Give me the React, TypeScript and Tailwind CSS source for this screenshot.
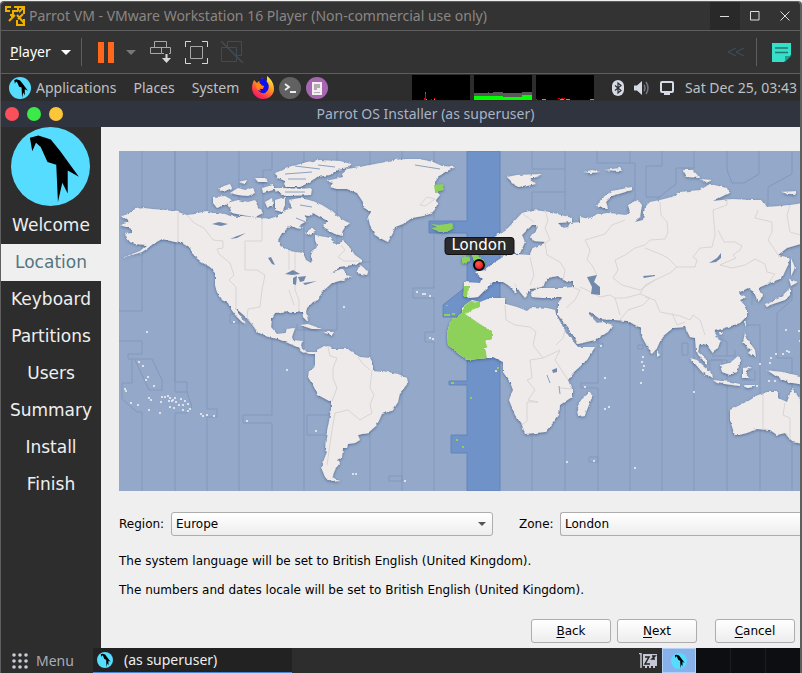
import React from "react";

const SEA = "#94a9c9";

function ParrotLogo({ className }: { className: string }) {
  return (
    <svg viewBox="34 23 234 234" className={className} aria-hidden="true">
      <circle cx="151" cy="140" r="117" fill="#55dcff" />
      <path
        d="M90 55L115 48L152 60L180 95L235 170L202 152V220L186 188L173 245L168 135L142 127L122 82L108 70L97 95Z"
        fill="#000"
      />
    </svg>
  );
}

function VmLogo() {
  return (
    <svg viewBox="0 0 20 20" className="size-5" aria-hidden="true" fill="none" stroke="#efb000" strokeWidth="2">
      <path d="M6 1H1V5H5M9 1H19V8M8 4V9H5M9 5H13M13 1V5M14 6L18 2" />
      <path d="M12 9L19 17M19 13V19H13M13 13L18 8M4 15L10 9M6 10H10M12 14V19H17" />
    </svg>
  );
}

const zoneLines = [
  "M142 151V311H119M119 341H142V354H128V359H152L162 380V390H149L135 360M132 359V383H122V399L137 412H142V491",
  "M175 151V382H187V392H175ZM187 392L192 407L187 413H175V491",
  "M207 151V409H217V417H207V491M239 151V491M272 151V170H263V215M272 310V415H243V423H272V491",
  "M304 151V491M337 151V330H297V324M370 151V491M329 415H307V435H325",
  "M402 151V491M389 476H402V481H389ZM434 151V221M434 233V288H413V298H434V332H425V342H434V491",
  "M532 151V169H565M565 151V210M532 212V192H565M532 430V491M565 400V491",
  "M597 151V163H635V198L626 212M630 151V163M662 151V166H646V197H660M694 151V168H676V184L657 199",
  "M727 151V170L732 183H744L759 174V151M792 151V174L768 187V205",
  "M598 330V383H581V388H598V491M598 343H603V347H598M630 320V491M638 345H643V349H638ZM662 335V491M694 340V491",
  "M682 343H688V355H682ZM711 360H727V491M727 356V342L720 338M760 325H747M760 325V405M760 430V491M792 300L777 313V358H792V491",
  "M752 305V290M792 280V300M589 457H598V462H589ZM353 262H370M233 314H230V323H239",
  "M710 370V360H722V370M735 350V356H712M748 380H755V370",
];

const land = [
  "M122 216L128 214L135 209L144 208L152 209L165 210L178 212L187 215L195 214L202 212L207 211L212 213L218 213L225 214L230 216L237 217L243 216L252 217L262 218L269 219L275 217L280 214L287 213L287 219L293 223L288 228L282 233L278 240L280 245L288 250L295 252L303 253L306 260L311 263L313 258L311 254L317 245L315 240L315 235L320 236L330 238L335 244L340 243L343 240L350 248L355 255L362 260L362 262L352 265L340 267L330 274L338 270L343 269L347 275L352 277L343 280L332 283L322 292L318 300L313 302L307 308L306 312L309 318L307 321L303 317L302 312L292 312L287 311L275 313L272 318L271 327L277 334L285 333L287 329L295 328L292 337L293 340L302 341L301 347L307 352L315 352L318 354L310 354L302 351L297 347L288 343L278 339L268 337L257 332L253 325L247 318L240 312L235 308L240 316L246 324L242 322L236 316L231 309L228 303L222 300L217 292L215 285L215 272L210 267L203 263L195 257L190 248L182 243L175 242L162 239L153 244L148 248L142 252L132 255L122 258L140 251L147 245L135 244L130 242L127 238L125 233L132 232L132 229L120 225L130 222Z",
  "M213 197L225 196L232 200L225 205L217 208L213 203Z",
  "M227 203L238 200L248 202L255 200L258 207L263 213L255 217L242 215L232 213L230 208Z",
  "M218 188L230 184L232 188L223 192ZM230 193L238 188L245 190L253 188L255 193L248 196L238 195ZM238 182L247 180L245 184ZM255 178L265 178L268 182L258 182ZM262 188L273 185L273 190L263 193ZM265 202L272 198L273 205L267 207ZM275 200L285 197L285 205L282 212L275 210Z",
  "M275 173L285 169L295 166L295 182L285 181L278 178ZM273 188L282 188L300 189L312 188L311 195L285 196Z",
  "M290 172L293 166L307 162L320 160L340 161L351 164L348 168L337 170L330 175L317 177L308 183L300 187L287 187L284 184Z",
  "M289 200L300 198L313 201L322 205L330 210L338 217L347 222L350 223L345 227L342 232L343 236L335 234L325 229L323 225L328 221L320 217L313 213L308 217L300 213L292 208Z",
  "M283 211L293 208L304 214L307 221L300 225L303 229L296 228L290 224L284 224ZM305 233L312 228L316 231L308 235Z",
  "M326 181L335 179L343 177L342 173L347 169L360 167L370 165L380 163L393 160L407 159L420 159L433 162L442 166L455 167L447 171L440 175L435 182L435 190L440 195L436 200L437 205L433 213L423 216L412 218L403 224L395 227L393 233L388 242L380 238L375 235L370 225L368 217L371 212L363 207L363 202L357 193L347 189L337 189L330 187L333 183Z",
  "M356 273L360 265L363 267L368 272L367 275Z",
  "M315 353L318 349L328 346L332 349L348 349L353 353L360 357L370 358L373 363L373 370L382 371L398 374L407 378L408 383L400 393L398 402L393 410L382 414L377 425L368 433L358 435L360 440L355 443L348 444L347 448L343 448L342 457L337 460L340 464L335 470L333 475L332 477L340 481L332 482L325 477L321 467L323 462L327 452L325 450L326 438L328 427L331 410L331 402L318 395L313 385L308 377L309 372L315 365Z",
  "M300 325L308 324L322 329L312 329ZM323 332L334 332L332 335Z",
  "M472 300L480 302L490 298L505 298L506 304L517 307L527 311L532 307L547 308L555 310L556 314L563 327L570 338L578 347L595 347L587 360L573 373L568 380L572 390L572 397L560 405L559 415L553 423L545 432L525 434L522 425L515 415L509 400L513 390L510 382L503 372L503 362L493 357L487 358L468 360L460 355L448 345L447 333L450 322L462 313L462 307Z",
  "M464 282L480 283L482 278L475 272L485 270L495 262L503 257L507 255L507 248L512 247L513 254L530 255L533 248L547 242L533 241L531 237L537 229L536 225L532 225L522 235L525 242L520 253L515 253L510 245L503 251L495 245L493 238L508 228L522 213L533 210L550 212L572 218L572 222L558 223L563 228L568 227L570 223L580 222L580 217L590 219L597 214L610 213L625 215L630 212L628 205L638 200L642 205L640 217L635 222L643 220L645 207L650 202L660 200L672 197L680 192L700 190L710 184L727 188L729 193L713 201L732 199L750 200L762 200L767 207L790 205L804 203L804 243L787 248L778 255L790 258L788 265L782 278L770 283L758 288L763 297L758 302L754 292L748 288L738 293L747 297L740 300L747 308L747 316L740 323L725 328L714 331L720 342L718 348L712 352L707 345L700 343L698 352L707 360L707 365L700 358L696 350L695 338L690 337L685 327L673 328L662 337L657 348L653 353L648 348L641 335L641 328L635 325L628 321L600 319L590 312L588 313L597 323L603 322L613 325L608 332L595 340L578 344L573 335L558 315L558 303L562 298L543 298L532 297L530 292L540 288L562 288L573 287L573 282L563 280L558 276L547 278L543 287L530 289L525 298L520 292L512 280L517 288L516 293L508 285L503 282L493 282L483 292L478 297L470 298L464 295Z",
  "M507 177L517 175L542 174L530 180L536 184L518 188ZM596 207L602 198L612 191L632 187L632 190L612 196L606 202L608 208ZM683 170L693 170L700 178L687 177ZM700 179L712 180L706 183ZM781 192L797 191L795 195ZM583 172L592 170L600 172L590 173ZM604 170L620 168L622 171Z",
  "M791 257L795 268L791 276ZM789 279L798 282L791 286ZM790 288L790 295L785 300L773 304L767 308L765 304L780 298ZM657 350L660 355L657 357ZM590 392L592 397L585 415L578 416L577 408L581 400Z",
  "M690 358L697 360L712 373L713 379L703 373ZM713 380L730 382L740 384L740 386L717 383ZM720 365L730 363L738 356L741 360L737 372L730 375L722 372ZM743 368L753 367L745 371L749 378L743 378ZM745 333L748 340L755 350L756 357L748 353L751 350L743 342ZM745 321L747 322L745 327ZM719 332L723 332L720 335ZM743 385L757 385L750 388Z",
  "M767 370L773 371L783 372L804 377L804 385L788 382L777 377ZM730 410L740 405L750 400L758 395L767 392L778 392L778 398L787 402L792 388L804 405L804 444L792 442L785 433L777 435L770 430L757 429L747 433L735 436L730 420Z",
];

const borders = [
  "M178 212V242M187 215L194 223L204 228L213 240L223 241V248L217 249L219 254L230 263L234 275L229 280L236 287V308M262 218V241H245V270H257L265 275L262 290L260 307L248 309L247 318L258 332",
  "M289 250V270M289 290L294 305M295 252V290L299 300V312M341 245L345 250L338 257L344 261H360M372 370L370 388L374 395L370 405L372 413L360 420L348 410L335 413L332 430L327 465M328 347L330 356L337 358L333 368V378L337 388L332 401M358 357L362 363L370 370",
  "M505 305L506 320L515 325L530 327L536 332L533 345L543 358L530 360L532 378L527 380L535 390L528 400L538 402L527 402V421L522 425M543 358L560 350L555 360L568 380M565 330L563 338L556 345M572 389L560 388M420 205L427 197L435 199L425 206Z",
  "M523 214L534 222M545 210L548 220L545 228L550 240L545 243L547 255L560 262L565 270L563 280M530 257L534 275L530 285M572 287L580 290L575 300L566 308M580 287L587 290M597 275L592 265L587 260L590 250L585 240L595 237L605 234L612 225L625 220",
  "M660 202L661 215L667 222L668 232L665 239L650 240L645 245L635 248L625 255L615 260L618 270L613 278L622 285L640 290L655 280L670 273L677 267L668 258L660 254L645 248M677 267L695 267L697 260L693 257L700 248L712 247L715 235L713 210L727 205L727 199M718 230L724 242L735 242L742 246L740 250L733 255L736 258L720 265L732 268L745 265L755 259L765 264L767 272L775 274L767 285",
  "M758 210L755 218L772 222L772 232L768 240L775 250L780 258M790 205L787 215L790 232L804 236M615 298H625L640 294L650 298L643 305L628 310L620 320M640 294L645 285L655 280M645 297L655 300L660 312L680 316L690 320L693 315L700 320L705 335M610 295L615 298L620 315M587 290L600 297L610 295M672 313L677 325L685 322M763 393V430M785 403L783 415L790 418V440",
];

const islets: [number, number][] = [
  [146, 331], [138, 361], [142, 365], [147, 376], [145, 379], [153, 385], [124, 388], [125, 390], [130, 402], [137, 404], [148, 397], [150, 399],
  [148, 409], [159, 412], [161, 396], [164, 396], [167, 395], [169, 397], [172, 399], [174, 397], [175, 401], [168, 400], [171, 400], [160, 401],
  [169, 406], [173, 407], [180, 398], [178, 404], [182, 404], [184, 400], [187, 403], [189, 408], [182, 409], [187, 410], [200, 413], [202, 415],
  [206, 414], [213, 415], [246, 420], [286, 369], [315, 430], [233, 321], [343, 306], [416, 291], [422, 293], [424, 293], [429, 295],
  [429, 337], [432, 338], [352, 473], [355, 473], [404, 480], [584, 386], [604, 377], [604, 408], [608, 406], [600, 345], [640, 382],
  [642, 356], [641, 361], [643, 365], [642, 369], [693, 391], [566, 461], [593, 460], [634, 467], [785, 329], [786, 350], [782, 353],
  [788, 351], [775, 353], [770, 357], [769, 362], [768, 380], [774, 380], [759, 363], [798, 330], [799, 340], [756, 385], [495, 370],
];

function WorldMap() {
  return (
    <svg
      viewBox="119 151 681 340"
      className="block w-full"
      role="img"
      aria-label="World time zone map"
      fontFamily="'DejaVu Sans', sans-serif"
    >
      <defs>
        <filter id="coast" x="0" y="0" width="1" height="1">
          <feTurbulence type="fractalNoise" baseFrequency="0.2" numOctaves="2" seed="4" result="n" />
          <feDisplacementMap in="SourceGraphic" in2="n" scale="3" xChannelSelector="R" yChannelSelector="G" result="d" />
          <feGaussianBlur in="d" stdDeviation="0.35" result="s" />
          <feDropShadow in="s" dx="0" dy="1" stdDeviation="1.4" floodColor="#3a5580" floodOpacity="0.75" />
        </filter>
        <radialGradient id="pin" cx="0.4" cy="0.35" r="0.7">
          <stop offset="0" stopColor="#ff5b52" />
          <stop offset="1" stopColor="#e01010" />
        </radialGradient>
      </defs>
      <rect x="119" y="151" width="681" height="340" fill={SEA} />
      <path
        d="M467 151H500V491H467V453H451V435H467V385H449V381H467V320L455 317H443V305L467 286V233H429V221H467Z"
        fill="#6f92c8"
        stroke="#6484b8"
      />
      <path d={zoneLines.join("")} fill="none" stroke="#8397ba" />
      <g filter="url(#coast)">
        <rect x="119" y="151" width="681" height="340" fill="none" />
        <path d={land.join("")} fill="#efebea" />
        <path
          d="M468 360L460 355L448 345L447 333L450 322L462 313L464 306L471 301L480 302L480 306L465 314L492 332V339L485 342L488 347L485 348L487 358ZM464 286H469L468 297L463 297ZM434 185L443 184L444 190L435 192ZM431 224L437 227L431 228L439 232L447 232L454 228L452 223L440 225ZM462 258L470 256V261L462 264ZM469 249L476 250L479 257L486 262L484 266L474 268L473 258Z"
          fill="#8dd05a"
        />
      </g>
      <path d={borders.join("")} fill="none" stroke="#d9d5d4" strokeLinejoin="round" />
      <path
        d="M587 277L597 275L594 282L600 287V295L591 294L592 287ZM212 224L219 222L228 224L221 226ZM230 239L237 236L246 233L237 238ZM268 258L271 257L275 265L272 264ZM285 274L293 270L300 274L292 275ZM293 278L297 276L296 285L293 284ZM298 277L306 276L304 281L300 282ZM303 283L317 281L305 285ZM552 370L557 368V372L553 373ZM709 263L717 258L721 253V258L716 262ZM643 276L655 275V276L644 278Z"
        fill="#7389ac"
      />
      <path
        d="M547 375L550 383M559 386L560 394M295 166L320 169M285 174L312 172M288 179L306 179M318 165L335 167M285 192L305 192M300 205L312 207M308 223L296 218M440 169L415 165"
        fill="none"
        stroke="#8ba0c0"
      />
      <g fill="#f0efef" fillOpacity="0.8">
        {islets.map(([x, y]) => (
          <rect key={`${x}-${y}`} x={x} y={y} width="2" height="2" />
        ))}
      </g>
      <path d="M446 305h2v1h-2ZM444 314h6v2h-6ZM452 313h3v2h-3ZM497 367h2v2h-2ZM451 382h3v2h-3ZM470 397h2v2h-2ZM456 439h2v2h-2ZM462 446h2v2h-2Z" fill="#8dd05a" />
      <circle cx="479" cy="265" r="5" fill="url(#pin)" stroke="#000" strokeWidth="2" />
      <rect x="445" y="237.5" width="69" height="17" rx="3" fill="#2b2b2b" stroke="#111" />
      <text x="479" y="250" fontSize="15" fill="#fff" textAnchor="middle">
        London
      </text>
    </svg>
  );
}

function Titlebar() {
  return (
    <header className="flex h-7 items-center bg-[#333333] pl-1 text-[#8b8682]">
      <VmLogo />
      <h1 className="ml-1 flex-1 text-[14px] leading-7">Parrot VM - VMware Workstation 16 Player (Non-commercial use only)</h1>
      <button aria-label="Minimize" className="flex h-7 w-[30px] items-center justify-center bg-[#292929]">
        <svg viewBox="0 0 10 10" className="size-[10px]" stroke="#ddd" fill="none"><path d="M0 5.5H9" /></svg>
      </button>
      <button aria-label="Maximize" className="flex h-7 w-[30px] items-center justify-center">
        <svg viewBox="0 0 10 10" className="size-[10px]" stroke="#ddd" fill="none"><path d="M.5.5H9V9H.5Z" /></svg>
      </button>
      <button aria-label="Close" className="flex h-7 w-[30px] items-center justify-center">
        <svg viewBox="0 0 10 10" className="size-[10px]" stroke="#ddd" fill="none"><path d="M.5.5L9.5 9.5M9.5.5L.5 9.5" /></svg>
      </button>
    </header>
  );
}

function Toolbar() {
  return (
    <div className="flex h-11 items-center border-y border-[#5e5e5e] bg-[#333333] pl-[9px] pr-[9px]">
      <button className="flex items-center gap-[10px] text-[14px] leading-5 text-white">
        <span><span className="underline underline-offset-2">P</span>layer</span>
        <svg viewBox="0 0 10 5" className="h-[5px] w-[10px]" fill="#fff"><path d="M0 0H10L5 5Z" /></svg>
      </button>
      <span className="ml-[10px] h-7 w-px bg-[#5e5e5e]" />
      <button aria-label="Pause" className="ml-4 flex items-center gap-3">
        <svg viewBox="0 0 16 21" className="h-[21px] w-4" fill="#ff671b"><path d="M0 0H6V21H0ZM10 0H16V21H10Z" /></svg>
        <svg viewBox="0 0 10 5" className="h-[5px] w-[10px]" fill="#777"><path d="M0 0H10L5 5Z" /></svg>
      </button>
      <button aria-label="Send keys" className="ml-[14px]">
        <svg viewBox="0 0 22 22" className="size-[22px]" stroke="#a8a8a8" fill="none">
          <path d="M4.500 .5H16.500V6.500H4.500ZM.5 6.500H11.500V12.500H.5ZM11.500 6.500H20.500V12.500H11.500" />
          <path d="M16.500 10V21" stroke="#333333" strokeWidth="5" />
          <path d="M16.500 13V19" stroke="#d8d8d8" strokeWidth="2" />
          <path d="M12 17H21L16.500 22Z" fill="#d8d8d8" stroke="none" />
        </svg>
      </button>
      <button aria-label="Full screen" className="ml-[13px]">
        <svg viewBox="0 0 23 23" className="size-[23px]" stroke="#d8d8d8" fill="none">
          <path d="M.5 6V.5H6M17 .5H22.500V6M22.500 17V22.500H17M6 22.500H.5V17" />
          <path d="M5.500 5.500H17.500V17.500H5.500Z" stroke="#a8a8a8" />
        </svg>
      </button>
      <button aria-label="Unity" className="ml-3">
        <svg viewBox="0 0 24 22" className="h-[22px] w-6" stroke="#3f4c56" fill="none">
          <path d="M7.500 6V.5H21.500V14.500H17M1.500 6.500H16.500V20.500H1.500Z" />
          <path d="M1 0L23 22" strokeWidth="1.500" />
        </svg>
      </button>
      <button aria-label="Hide toolbar" className="ml-auto">
        <svg viewBox="0 0 18 10" className="h-[10px] w-[18px]" stroke="#40515f" fill="none">
          <path d="M9 1L1 5L9 9M17 1L9 5L17 9" />
        </svg>
      </button>
      <span className="ml-[11px] h-7 w-px bg-[#5e5e5e]" />
      <button aria-label="Notes" className="ml-[15px]">
        <svg viewBox="0 0 19 19" className="size-[19px]">
          <path d="M0 0H19V12L12 19H0Z" fill="#36dfc8" />
          <path d="M3 5H16M3 9.500H16" stroke="#217a70" strokeWidth="1.500" />
          <path d="M19 13L13 19V13Z" fill="#1f9d8e" />
        </svg>
      </button>
    </div>
  );
}

function Panel() {
  return (
    <div className="flex h-[27px] items-center bg-[#2d2d2d] pl-2 pr-[3px] text-[14px] leading-[27px] text-[#bfc0c4]">
      <ParrotLogo className="size-[22px]" />
      <nav className="ml-[5px] flex gap-[17px]">
        <button>Applications</button>
        <button>Places</button>
        <button>System</button>
      </nav>
      <div className="ml-[13px] flex items-center gap-[5px]">
        <button aria-label="Firefox">
          <svg viewBox="0 0 22 23" className="h-[23px] w-[22px]">
            <defs>
              <linearGradient id="fx" x1="0.8" y1="0" x2="0.2" y2="1">
                <stop offset="0" stopColor="#fff44f" /><stop offset=".4" stopColor="#ff9a1f" /><stop offset=".8" stopColor="#ff2d4b" /><stop offset="1" stopColor="#e31587" />
              </linearGradient>
            </defs>
            <path d="M2 4L5 7L10 2L15 5L15 0C20 4 22 8 22 13C22 19 17 23 11 23C5 23 0 18 0 12C0 9 1 6 2 4Z" fill="url(#fx)" />
            <path d="M7 4C9 1 14 2 15 6C18 9 17 15 13 17C9 18 6 15 6 13L11 13L12 10L8 9Z" fill="#1010e8" />
            <path d="M5 7L9 8L10 11L7 12L9 15C5 14 3 11 5 7Z" fill="#ff8a16" />
          </svg>
        </button>
        <button aria-label="Terminal">
          <svg viewBox="0 0 22 22" className="size-[22px]" fill="none" stroke="#eee" strokeWidth="1.800">
            <circle cx="11" cy="11" r="11" fill="#616161" stroke="none" /><path d="M6 7L10 10L6 13M11 15H17" />
          </svg>
        </button>
        <button aria-label="Text editor">
          <svg viewBox="0 0 22 22" className="size-[22px]">
            <circle cx="11" cy="11" r="11" fill="#a666b0" /><path d="M6 5H16V18H6Z" fill="#f3eef0" />
            <path d="M8 7H14V11H11V13H8ZM8 15H14V16H8Z" fill="#b3aab2" />
          </svg>
        </button>
      </div>
      <div className="ml-auto flex gap-1">
        <svg viewBox="0 0 58 25" className="h-[25px] w-[58px] bg-black"><path d="M13.500 25V17" stroke="#666" /><path d="M12.500 25V23M13.500 25V19M19.500 25V24M22.500 25V23" stroke="#e00000" /><path d="M14 24.500H15M22 24.500H23" stroke="#0f0" /></svg>
        <svg viewBox="0 0 58 25" className="h-[25px] w-[58px] bg-black"><path d="M0 18H14V17H15V18H19V17H29V18H48V17H58V25H0Z" fill="#585858" /><path d="M0 21H29V22H48V20H58V25H0Z" fill="#0f0" /></svg>
        <svg viewBox="0 0 58 25" className="h-[25px] w-[58px] bg-black"><path d="M0 24.500H1M22 23.500H29" stroke="#e00000" strokeDasharray="2 1" /><path d="M6 24.500H11M24 24.500H28M30 24.500H35M54 24.500H58" stroke="#0f0" strokeDasharray="4 1" /></svg>
      </div>
      <div className="ml-[18px] flex items-center gap-[10px]">
        <svg viewBox="0 0 12 16" className="h-4 w-3" fill="#d5dae4"><rect width="12" height="16" rx="6" /><path d="M3 5.500L9 10.500L6 13V3L9 5.500L3 10.500" fill="none" stroke="#2d2d2d" strokeWidth="1.200" /></svg>
        <svg viewBox="0 0 16 14" className="h-[14px] w-4"><path d="M0 4.500H3L8 0V14L3 9.500H0Z" fill="#d5dae4" /><path d="M10 4Q12 7 10 10M12 1Q16 7 12 13" fill="none" stroke="#74777e" strokeWidth="1.500" /></svg>
        <svg viewBox="0 0 14 14" className="size-[14px]" fill="none" stroke="#d5dae4" strokeWidth="2"><rect x="1" y="1" width="12" height="10" rx="1" /><path d="M4 13H10" /></svg>
      </div>
      <time className="ml-[11px]">Sat Dec 25, 03:43</time>
    </div>
  );
}

const steps = ["Welcome", "Location", "Keyboard", "Partitions", "Users", "Summary", "Install", "Finish"];

function Sidebar() {
  return (
    <aside className="w-[100px] shrink-0 bg-[#2d2d2d]">
      <div className="flex h-20 pl-[10px]">
        <ParrotLogo className="size-[79px]" />
      </div>
      <ol>
        {steps.map((s) => (
          <li
            key={s}
            aria-current={s === "Location" ? "step" : undefined}
            className={
              s === "Location"
                ? "bg-[#efefef] text-center text-[17px] leading-[37px] text-[#537680]"
                : "text-center text-[17px] leading-[37px] text-[#efefef]"
            }
          >
            {s}
          </li>
        ))}
      </ol>
    </aside>
  );
}

function PushButton({ letter, rest }: { letter: string; rest: string }) {
  return (
    <button className="h-6 w-20 rounded-[3px] border border-[#adadad] bg-linear-to-b from-white to-[#ededed] text-[12px] leading-5">
      <span className="underline underline-offset-2">{letter}</span>
      {rest}
    </button>
  );
}

function Installer() {
  return (
    <main className="flex min-h-[521px] bg-[#efefef] font-['DejaVu_Sans',sans-serif]">
      <Sidebar />
      <section className="min-w-0 flex-1 pl-[18px] pt-6 text-[12px] leading-[15px] text-black">
        <WorldMap />
        <form className="mt-[21px] flex gap-[26px]">
          <div className="flex w-[374px] items-center">
            <label htmlFor="region" className="w-[52px]">Region:</label>
            <div className="relative flex-1">
              <select id="region" className="h-6 w-full appearance-none rounded-[3px] border border-[#adadad] bg-linear-to-b from-white to-[#ededed] px-1">
                <option>Europe</option>
              </select>
              <svg viewBox="0 0 8 4" className="pointer-events-none absolute right-[7px] top-[10px] h-1 w-2" fill="#555"><path d="M0 0H8L4 4Z" /></svg>
            </div>
          </div>
          <div className="flex flex-1 items-center">
            <label htmlFor="zone" className="w-[41px]">Zone:</label>
            <select id="zone" className="h-6 flex-1 appearance-none rounded-l-[3px] border border-r-0 border-[#adadad] bg-linear-to-b from-white to-[#ededed] px-1">
              <option>London</option>
            </select>
          </div>
        </form>
        <p className="mt-[18px]">The system language will be set to British English (United Kingdom).</p>
        <p className="mt-[14px]">The numbers and dates locale will be set to British English (United Kingdom).</p>
        <div className="mt-[21px] flex justify-end pr-[5px]">
          <PushButton letter="B" rest="ack" />
          <div className="ml-[6px] mr-[18px]"><PushButton letter="N" rest="ext" /></div>
          <PushButton letter="C" rest="ancel" />
        </div>
      </section>
    </main>
  );
}

function Taskbar() {
  return (
    <footer className="flex h-[25px] items-stretch bg-[#2d2d2d] text-[14px] leading-6">
      <button className="flex w-[92px] items-center gap-2 pl-[11px] text-[#a9acb3]">
        <svg viewBox="0 0 16 16" className="size-4" fill="#c9ccd6">
          {[2, 8, 14].map((y) => [2, 8, 14].map((x) => <circle key={`${x}${y}`} cx={x} cy={y} r="1.800" />))}
        </svg>
        Menu
      </button>
      <button className="flex w-[199px] items-center border-b border-[#4a86d8] bg-[#222222] pl-1 text-[#eee]">
        <ParrotLogo className="size-4" />
        <span className="ml-[11px]">(as superuser)</span>
      </button>
      <div className="ml-auto flex">
        <svg viewBox="0 0 18 16" className="mr-[5px] mt-[5px] h-4 w-[18px]">
          <path d="M0 .5H2V15" stroke="#c4c8d4" fill="none" strokeWidth="1.500" />
          <path d="M4 1H18V13H16V15H14V13H12V15H10V13H8V15H6V13H4Z" fill="#c4c8d4" />
          <path d="M6 4H10L6 11H11M13 3H16L13 6H16" fill="none" stroke="#222" strokeWidth="1.500" />
        </svg>
        <div className="flex w-[34px] items-center justify-center border border-[#b5d0f5] bg-[#86b1ea]"><ParrotLogo className="size-4" /></div>
        <div className="w-[35px] border-r border-[#1d1e22] bg-[#0d0e12]" />
        <div className="w-[35px] border-r border-[#1d1e22] bg-[#0d0e12]" />
        <div className="w-[34px] bg-[#0d0e12]" />
      </div>
    </footer>
  );
}

export default function App() {
  return (
    <div className="bg-[#efefef] pt-px font-['Noto_Sans',sans-serif]">
      <div className="overflow-hidden rounded-t-[4px] border border-b-0 border-r-2 border-[#5e5e5e]">
        <Titlebar />
        <Toolbar />
        <Panel />
        <div className="flex h-[26px] items-center bg-[#2f343f]">
          <div className="flex w-[100px] gap-2 pl-1">
            <span className="size-[14px] rounded-full bg-[#f9505a]" />
            <span className="size-[14px] rounded-full bg-[#3bea49]" />
            <span className="size-[14px] rounded-full bg-[#fcc63a]" />
          </div>
          <h2 className="flex-1 pr-[50px] text-center text-[14px] leading-6 text-[#a9b3c4]">Parrot OS Installer (as superuser)</h2>
        </div>
        <Installer />
        <Taskbar />
      </div>
    </div>
  );
}
